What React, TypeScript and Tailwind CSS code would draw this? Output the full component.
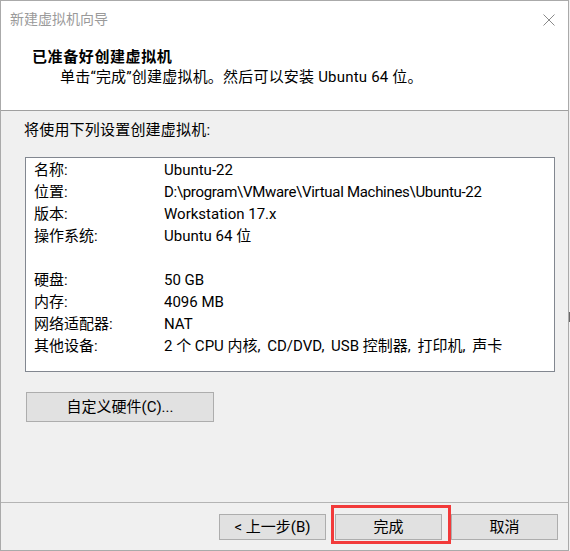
const rows: [string, string][] = [
  ['名称:', 'Ubuntu-22'],
  ['位置:', 'D:\\program\\VMware\\Virtual Machines\\Ubuntu-22'],
  ['版本:', 'Workstation 17.x'],
  ['操作系统:', 'Ubuntu 64 位'],
  ['', ''],
  ['硬盘:', '50 GB'],
  ['内存:', '4096 MB'],
  ['网络适配器:', 'NAT'],
  ['其他设备:', '2 个 CPU 内核, CD/DVD, USB 控制器, 打印机, 声卡'],
];

// commas in the device list sit a little wider than Roboto's
const renderValue = (v: string) => {
  if (v.includes('\\')) return <span className="tracking-[-0.3px]">{v}</span>;
  const parts = v.split(', ');
  return parts.map((p, i) => (
    <span key={i}>
      {p}
      {i < parts.length - 1 && <span className="pr-[3px]">, </span>}
    </span>
  ));
};

const WinButton = ({ children }: { children: React.ReactNode }) => (
  <div className="w-[107px] h-[26px] flex items-center justify-center bg-[#e1e1e1] border border-[#adadad] leading-none">
    {children}
  </div>
);

export default function App() {
  return (
    <div className="relative w-[570px] h-[551px] bg-[#f0f0f0] font-[Roboto,'Noto_Sans_CJK_SC',sans-serif] text-[15px] text-black">
      <div className="w-[569px] h-[551px] flex flex-col border border-[#aaaaaa] bg-[#f0f0f0]">
        {/* header */}
        <div className="bg-white border-b border-[#a0a0a0] h-[110px] shrink-0">
          <div className="h-[37px] flex items-center justify-between pl-[9px] pr-[13px]">
            <span className="text-[14px] text-[#9a9a9a]">新建虚拟机向导</span>
            <svg width="12" height="12" viewBox="0 0 12 12" className="text-[#8a8a8a]">
              <path d="M0.5 0.5 L11.5 11.5 M11.5 0.5 L0.5 11.5" stroke="currentColor" strokeWidth="1" fill="none" />
            </svg>
          </div>
          <div className="pl-[31px] pt-[9px] leading-[20px] font-bold tracking-[0.6px]">已准备好创建虚拟机</div>
          <div className="pl-[59px] leading-[20px] tracking-[0.2px]">单击“完成”创建虚拟机。然后可以安装 Ubuntu 64 位。</div>
        </div>

        {/* body */}
        <div className="flex-1 flex flex-col">
          <div className="pl-[23px] pt-[9px] leading-[20px] tracking-[0.2px]">将使用下列设置创建虚拟机:</div>
          <div className="ml-[24px] mt-[17px] w-[530px] h-[215px] bg-white border border-[#828790] pt-[1px] pl-[8px]">
            {rows.map(([k, v], i) => (
              <div key={i} className="flex h-[22px] leading-[22px] whitespace-nowrap">
                <span className="w-[130px]">{k}</span>
                <span>{renderValue(v)}</span>
              </div>
            ))}
          </div>
          <div className="ml-[25px] mt-[20px] w-[188px] h-[30px] flex items-center justify-center bg-[#e1e1e1] border border-[#adadad] leading-none">
            自定义硬件(C)...
          </div>
        </div>

        {/* footer */}
        <div className="h-[48px] shrink-0 border-t border-[#b4b4b4] pt-[11px] pr-[10px] flex justify-end gap-[9px]">
          <WinButton>&lt; 上一步(B)</WinButton>
          <WinButton>完成</WinButton>
          <WinButton>取消</WinButton>
        </div>
      </div>

      {/* annotation */}
      <div className="absolute left-[331px] top-[505px] w-[120px] h-[39px] border-[3px] border-[#f23a3a]" />
      <div className="absolute left-[569px] top-[312px] w-[1px] h-[10px] bg-[#6a6a6a]" />
    </div>
  );
}
